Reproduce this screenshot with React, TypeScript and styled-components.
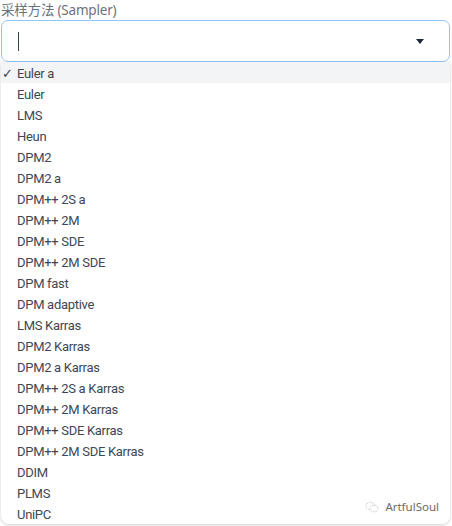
import React from "react";
import styled, { createGlobalStyle } from "styled-components";

const Global = createGlobalStyle`
  html, body { margin: 0; padding: 0; background: #ffffff; }
  body { font-family: "Source Sans Pro", Roboto, "Noto Sans CJK SC", sans-serif; }
`;

const Page = styled.div`
  position: relative;
  width: 452px;
  height: 526px;
  overflow: hidden;
  background: #fff;
`;

const Label = styled.div`
  font-family: "Noto Sans", "Noto Sans CJK SC", sans-serif;
  font-size: 13.5px;
  line-height: 20px;
  color: #6b7280;
  padding-left: 1px;
  height: 20px;
  letter-spacing: -0.2px;
`;

const Field = styled.div`
  margin: 0 1px 0 1px;
  width: 449px;
  box-sizing: border-box;
  height: 42px;
  border: 1px solid #93c5fd;
  border-radius: 7px;
  display: flex;
  align-items: center;
  padding: 0 16px;
  justify-content: space-between;
  background: #fff;
`;

const Caret = styled.div`
  width: 1px;
  height: 19px;
  background: #374151;
`;

const Arrow = styled.svg`
  width: 8px;
  height: 5px;
  margin-right: 9px;
`;

const List = styled.ul`
  list-style: none;
  margin: 0 0 0 1px;
  padding: 0;
  width: 449px;
  background: #fff;
  border-radius: 0 0 8px 8px;
  box-shadow: 0 1px 3px rgba(0, 0, 0, 0.18), 0 0 1px rgba(0, 0, 0, 0.15);
  overflow: hidden;
`;

const Item = styled.li<{ $active?: boolean }>`
  box-sizing: border-box;
  height: 21px;
  padding-top: 2px;
  line-height: 19px;
  font-size: 13px;
  letter-spacing: -0.3px;
  color: #3f4654;
  background: ${(p) => (p.$active ? "#f3f4f6" : "#fff")};
  display: flex;
  align-items: center;
  padding-left: 16px;
  position: relative;
`;

const Check = styled.span`
  position: absolute;
  left: 1px;
  top: 2px;
  font-size: 13px;
  color: #374151;
  font-family: "DejaVu Sans", sans-serif;
`;

const Watermark = styled.div`
  position: absolute;
  right: 13px;
  bottom: 12px;
  display: flex;
  align-items: center;
  gap: 6px;
  font-size: 11.5px;
  color: #6b6b6b;
  font-family: "Noto Sans", sans-serif;
`;

const items = [
  "Euler a",
  "Euler",
  "LMS",
  "Heun",
  "DPM2",
  "DPM2 a",
  "DPM++ 2S a",
  "DPM++ 2M",
  "DPM++ SDE",
  "DPM++ 2M SDE",
  "DPM fast",
  "DPM adaptive",
  "LMS Karras",
  "DPM2 Karras",
  "DPM2 a Karras",
  "DPM++ 2S a Karras",
  "DPM++ 2M Karras",
  "DPM++ SDE Karras",
  "DPM++ 2M SDE Karras",
  "DDIM",
  "PLMS",
  "UniPC",
];

export default function App() {
  return (
    <Page>
      <Global />
      <Label>采样方法 (Sampler)</Label>
      <Field>
        <Caret />
        <Arrow viewBox="0 0 8 5">
          <path d="M0 0 H8 L4 5 Z" fill="#1f2937" />
        </Arrow>
      </Field>
      <List>
        {items.map((it, i) => (
          <Item key={it} $active={i === 0}>
            {i === 0 && <Check>✓</Check>}
            {it}
          </Item>
        ))}
      </List>
      <Watermark>
        <svg width="14" height="12" viewBox="0 0 14 12">
          <ellipse cx="5.5" cy="5" rx="4.5" ry="3.8" fill="none" stroke="#c8c8c8" strokeWidth="1" strokeDasharray="1.5 1" />
          <ellipse cx="9" cy="7.5" rx="4" ry="3.3" fill="#fff" stroke="#c8c8c8" strokeWidth="1" strokeDasharray="1.5 1" />
        </svg>
        ArtfulSoul
      </Watermark>
    </Page>
  );
}
